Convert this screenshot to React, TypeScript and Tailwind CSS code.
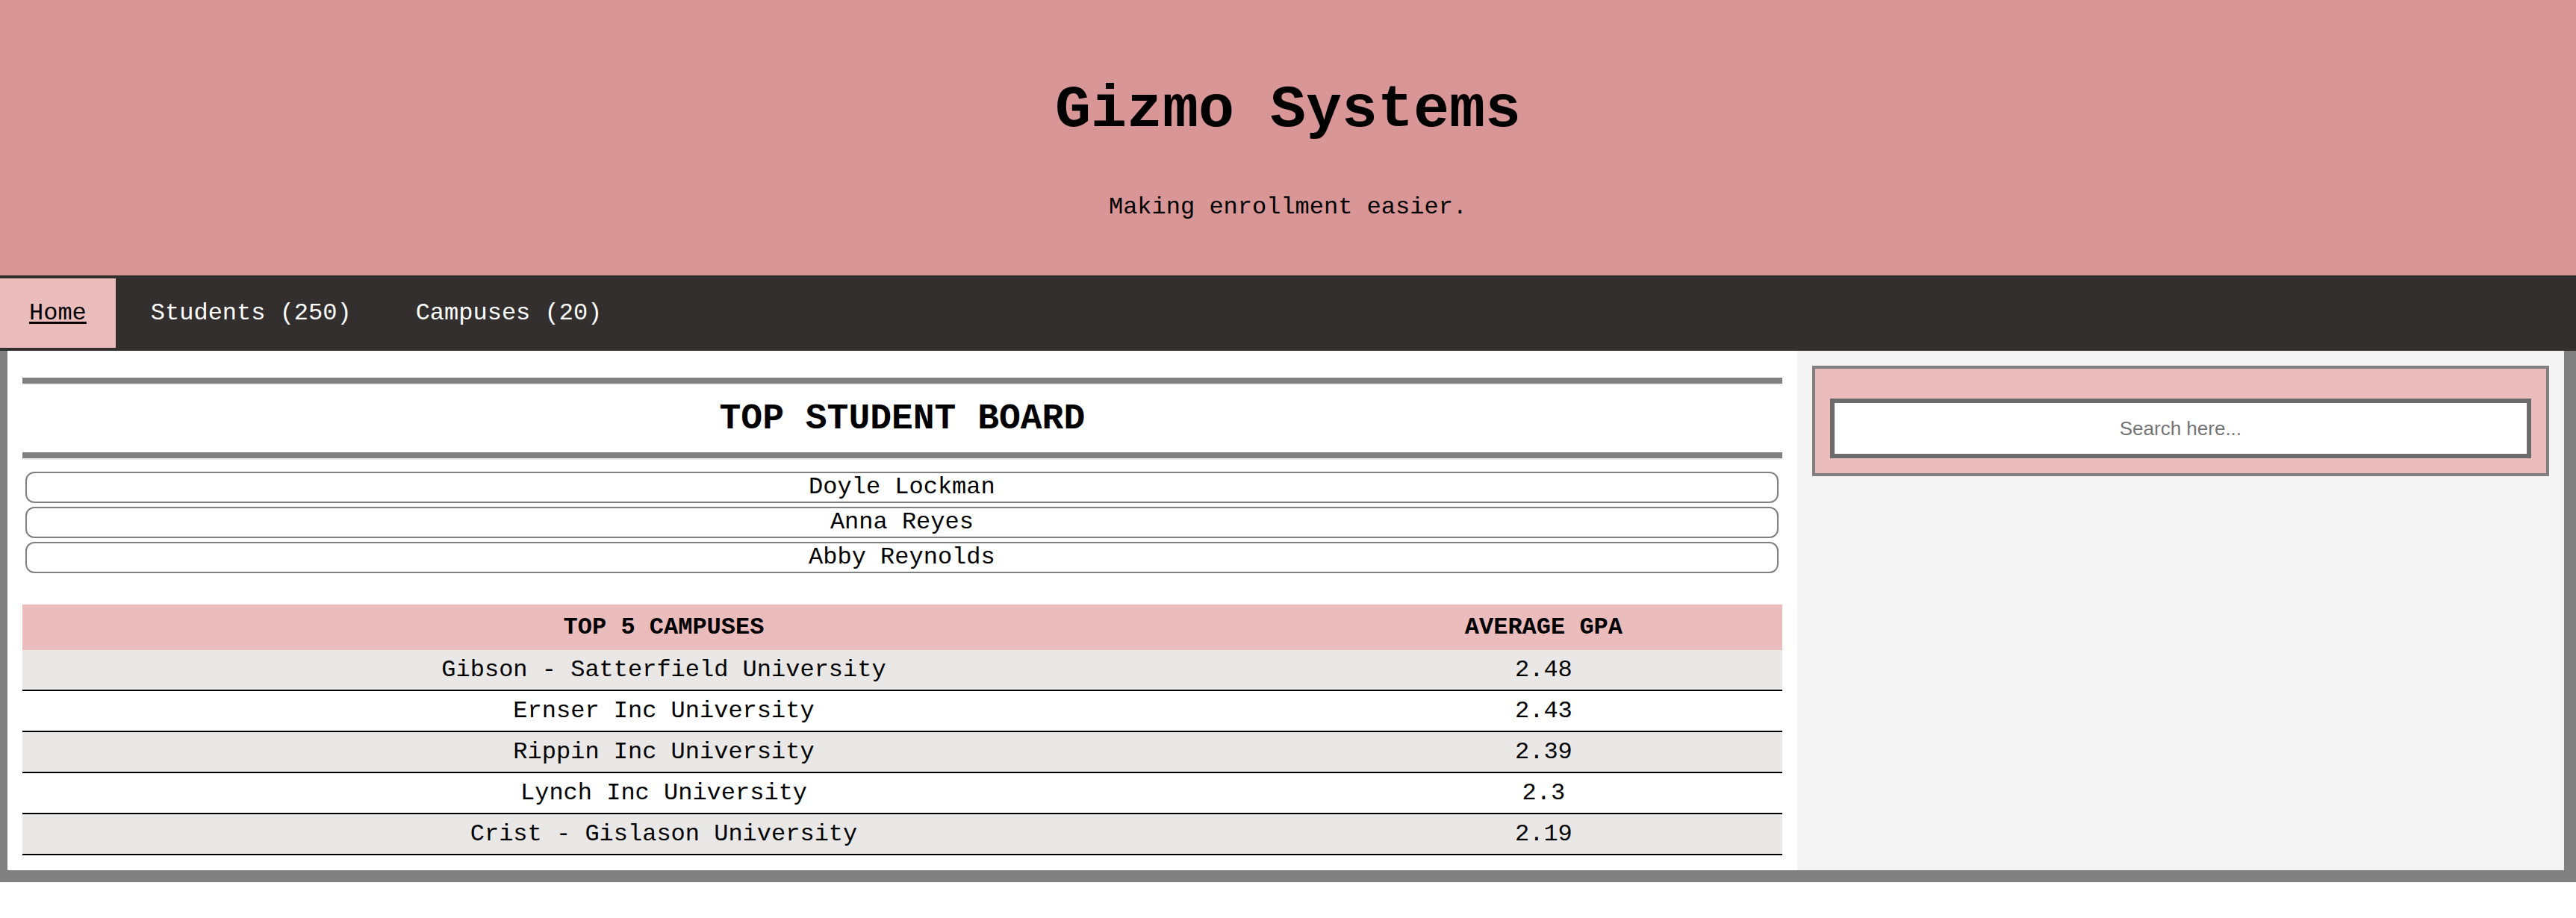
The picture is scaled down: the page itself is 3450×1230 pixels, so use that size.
export default function App() {
  const students = ["Doyle Lockman", "Anna Reyes", "Abby Reynolds"];
  const campuses: [string, string][] = [
    ["Gibson - Satterfield University", "2.48"],
    ["Ernser Inc University", "2.43"],
    ["Rippin Inc University", "2.39"],
    ["Lynch Inc University", "2.3"],
    ["Crist - Gislason University", "2.19"],
  ];
  return (
    <div className="w-[3450px] font-['Liberation_Mono','Courier_New',monospace] text-black bg-white">
      <header className="h-[369px] bg-[#d99696] flex flex-col items-center pt-[102px]">
        <h1 className="text-[80px] font-bold leading-[91px]">Gizmo Systems</h1>
        <p className="mt-[67px] text-[32px] leading-[36px]">Making enrollment easier.</p>
      </header>
      <nav className="h-[101px] bg-[#332f2e] flex items-stretch py-[4px] gap-[8px] text-[32px]">
        <a className="bg-[#ebbcbc] px-[39px] flex items-center text-black underline decoration-[3px] underline-offset-[3px]">
          Home
        </a>
        <a className="px-[39px] flex items-center text-white">Students (250)</a>
        <a className="px-[39px] flex items-center text-white">Campuses (20)</a>
      </nav>
      <main className="flex border-l-[10px] border-r-[16px] border-b-[16px] border-[#808080]">
        <section className="w-[70%] bg-white px-[20px] pt-[36px] pb-[20px]">
          <div className="border-t-[8px] border-t-[#808080] border-b-[2px] border-b-[#ececec]" />
          <h2 className="h-[90px] flex items-center justify-center text-[48px] font-bold leading-[54px]">
            TOP STUDENT BOARD
          </h2>
          <div className="border-t-[8px] border-t-[#808080] border-b-[2px] border-b-[#ececec]" />
          <div className="mt-[16px] flex flex-col gap-[5px]">
            {students.map((s) => (
              <div
                key={s}
                className="h-[42px] ml-[4px] mr-[5px] border-2 border-[#808080] rounded-[12px] flex items-center justify-center text-[32px] leading-[36px]"
              >
                {s}
              </div>
            ))}
          </div>
          <div className="mt-[42px]">
            <div className="grid grid-cols-[1718px_1fr] bg-[#ebbcbc] h-[61px] items-center text-[32px] font-bold text-center">
              <div>TOP 5 CAMPUSES</div>
              <div>AVERAGE GPA</div>
            </div>
            {campuses.map(([name, gpa], i) => (
              <div
                key={name}
                className={
                  i % 2 === 0
                    ? "grid grid-cols-[1718px_1fr] h-[55px] items-center text-[32px] text-center bg-[#e9e8e6] border-b-2 border-black"
                    : "grid grid-cols-[1718px_1fr] h-[55px] items-center text-[32px] text-center bg-white border-b-2 border-black"
                }
              >
                <div>{name}</div>
                <div>{gpa}</div>
              </div>
            ))}
          </div>
        </section>
        <aside className="w-[30%] bg-[#f4f4f4] p-[20px]">
          <div className="border-[4px] border-[#808080] bg-[#ebbcbc] pt-[40px] px-[20px] pb-[20px]">
            <input
              type="text"
              placeholder="Search here..."
              className="block w-full h-[80px] border-[6px] border-[#6b6b6b] bg-white text-center text-[26px] font-['Liberation_Sans',Arial,sans-serif] placeholder:text-[#757575] outline-none"
            />
          </div>
        </aside>
      </main>
    </div>
  );
}
